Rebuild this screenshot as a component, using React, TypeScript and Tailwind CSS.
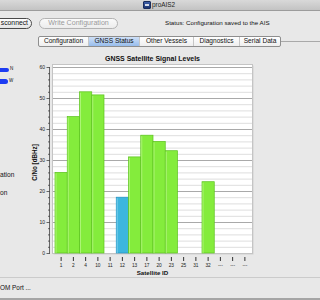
import React from 'react';

type Sat = { id: string; v: number; blue?: boolean };

const sats: Sat[] = [
  { id: '1', v: 26 },
  { id: '2', v: 44 },
  { id: '4', v: 52 },
  { id: '10', v: 51 },
  { id: '11', v: 0 },
  { id: '12', v: 18, blue: true },
  { id: '13', v: 31 },
  { id: '17', v: 38 },
  { id: '20', v: 36 },
  { id: '23', v: 33 },
  { id: '25', v: 0 },
  { id: '31', v: 0 },
  { id: '32', v: 23 },
  { id: '---', v: 0 },
  { id: '---', v: 0 },
  { id: '---', v: 0 },
];

const tabs = [
  { label: 'Configuration', w: 'w-[49px]' },
  { label: 'GNSS Status', w: 'w-[51px]', active: true },
  { label: 'Other Vessels', w: 'w-[54px]' },
  { label: 'Diagnostics', w: 'w-[46px]' },
  { label: 'Serial Data', w: 'w-[41px]' },
];

// chart geometry, in page coordinates
const X0 = 55;
const BW = 12.25;
const Y0 = 253;
const PX = 3.1; // px per dBHz
const yOf = (v: number) => Y0 - v * PX;

const SignalChart = () => {
  const grid = [];
  for (let v = 2; v <= 60; v += 2) grid.push(v);
  const font = { fontFamily: '"Liberation Sans", Arial, sans-serif' };

  return (
    <svg width="294" height="230" viewBox="0 0 294 230" className="block">
      <g transform="translate(-26,-47)" style={font}>
        <text x="152.5" y="61" textAnchor="middle" fontSize="6.4" fontWeight="bold" fill="#111" textLength="95" lengthAdjust="spacingAndGlyphs">
          GNSS Satellite Signal Levels
        </text>

        {/* plot frame */}
        <rect x="53.5" y="65.5" width="200" height="189" fill="#cfcfcf" />
        <rect x="52.5" y="64.5" width="200" height="189" fill="#fff" stroke="#c4c4c4" />

        {grid.map((v) => (
          <line
            key={v}
            x1="53"
            x2="252"
            y1={yOf(v) + 0.5}
            y2={yOf(v) + 0.5}
            stroke={v % 10 === 0 ? '#a9a9a9' : '#dedede'}
            strokeWidth="1"
          />
        ))}

        {/* bars */}
        {sats.map((s, i) =>
          s.v > 0 ? (
            <g key={i}>
              <rect
                x={X0 + i * BW}
                y={yOf(s.v)}
                width={BW}
                height={s.v * PX}
                fill={s.blue ? '#3db6de' : '#84ec3c'}
                stroke={s.blue ? '#2493c4' : '#5cc31f'}
                strokeWidth="0.7"
              />
              <line
                x1={X0 + i * BW + 1}
                x2={X0 + i * BW + 1}
                y1={yOf(s.v) + 1}
                y2={Y0}
                stroke={s.blue ? '#7fd0ee' : '#b6f784'}
                strokeWidth="0.8"
              />
            </g>
          ) : null
        )}

        {/* y axis */}
        <line x1="49.5" x2="49.5" y1="67" y2="253.5" stroke="#444" strokeWidth="0.8" />
        {grid.concat([0]).map((v) => (
          <line
            key={'t' + v}
            x1={v % 10 === 0 ? 46.5 : 48}
            x2="50"
            y1={yOf(v) + 0.5}
            y2={yOf(v) + 0.5}
            stroke="#444"
            strokeWidth="0.8"
          />
        ))}
        {[0, 10, 20, 30, 40, 50, 60].map((v) => (
          <text key={'l' + v} x="45" y={yOf(v) + 2.2} textAnchor="end" fontSize="5" fill="#222">
            {v}
          </text>
        ))}
        <g transform="translate(36.5,162.5)">
          <text transform="rotate(-90)" x="0" y="0" textAnchor="middle" fontSize="6.3" fontWeight="bold" fill="#111">
            C/No [dBHz]
          </text>
        </g>

        {/* x axis */}
        {sats.map((s, i) => {
          const cx = X0 + (i + 0.5) * BW;
          return (
            <g key={'x' + i}>
              <line x1={cx} x2={cx} y1="257" y2="261" stroke="#333" strokeWidth="1" />
              <text x={cx} y="267.3" textAnchor="middle" fontSize="4.8" fill="#222">
                {s.id}
              </text>
            </g>
          );
        })}
        <text x="152.5" y="275.3" textAnchor="middle" fontSize="6" fontWeight="bold" fill="#111" textLength="31.5" lengthAdjust="spacingAndGlyphs">
          Satellite ID
        </text>
      </g>
    </svg>
  );
};

export default function App() {
  return (
    <div className="w-[320px] h-[300px] overflow-hidden bg-[#e8e8e8] flex flex-col text-[#1a1a1a]" style={{ fontFamily: '"Liberation Sans", Arial, sans-serif' }}>
      {/* title bar */}
      <div className="h-[11px] shrink-0 bg-gradient-to-b from-[#d9d9d9] to-[#c3c3c3] border-b border-[#9c9c9c] flex items-center pl-[143px]">
        <div className="w-[8px] h-[8px] rounded-[1px] bg-gradient-to-b from-[#3d5fa8] to-[#1d3570] border border-[#1a2d5c] flex items-center justify-center">
          <div className="w-[4px] h-[2px] bg-white/80" />
        </div>
        <span className="ml-[1px] text-[6.4px] leading-none text-[#222]">proAIS2</span>
      </div>

      {/* toolbar */}
      <div className="h-[25px] shrink-0 flex items-center">
        <div className="-ml-[8px] w-[40px] h-[11px] rounded-full border border-[#4a4a4a] bg-gradient-to-b from-white to-[#e4e4e4] flex items-center justify-end pr-[3px] text-[6.8px] leading-none text-[#111]">
          sconnect
        </div>
        <div className="ml-[7px] w-[79px] h-[11px] rounded-full border border-[#b3b3b3] bg-gradient-to-b from-[#fafafa] to-[#ececec] flex items-center justify-center text-[7.1px] leading-none text-[#9a9a9a]">
          Write Configuration
        </div>
        <span className="ml-[47px] text-[6.2px] leading-none text-[#111]">Status: Configuration saved to the AIS</span>
      </div>

      {/* tabs */}
      <div className="h-[11px] shrink-0 flex pl-[38px]">
        <div className="flex border border-[#8e8e8e] rounded-[2px] overflow-hidden bg-gradient-to-b from-white to-[#eeeeee]">
          {tabs.map((t, i) => (
            <div
              key={t.label}
              className={`${t.w} flex items-center justify-center text-[6.6px] leading-none text-[#111] ${i > 0 ? 'border-l border-[#c6c6c6]' : ''} ${
                t.active ? 'bg-gradient-to-b from-[#cfe0f7] to-[#98bdec]' : ''
              }`}
            >
              {t.label}
            </div>
          ))}
        </div>
        <div className="flex-1 h-px bg-[#a9a9a9] self-center" />
      </div>

      {/* main */}
      <div className="h-[230px] shrink-0 flex">
        <div className="w-[26px] shrink-0 flex flex-col text-[#111]">
          <div className="mt-[20px] h-[5px] flex items-center">
            <div className="w-[9px] h-[4px] rounded-r-full bg-[#1d3cf2]" />
            <span className="ml-[1px] text-[4.5px] leading-none">N</span>
          </div>
          <div className="mt-[7px] h-[5px] flex items-center">
            <div className="w-[8px] h-[5px] rounded-r-full bg-[#1d3cf2]" />
            <span className="ml-[1px] text-[4.5px] leading-none">W</span>
          </div>
          <div className="mt-[87px] h-[8px] flex items-center text-[6.6px] leading-none">ation</div>
          <div className="mt-[10px] h-[8px] flex items-center text-[6.6px] leading-none">on</div>
        </div>
        <SignalChart />
      </div>

      {/* bottom */}
      <div className="flex-1 border-t border-[#cbcbcb] border-b-2 border-b-[#a5a5a5] flex items-center">
        <span className="text-[6.4px] leading-none text-[#111]">OM Port ...</span>
      </div>
    </div>
  );
}
